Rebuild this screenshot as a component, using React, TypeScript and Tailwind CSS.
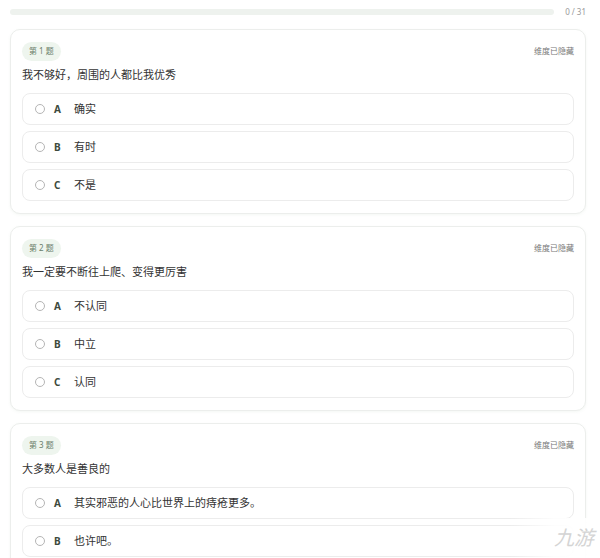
import React from 'react';

interface Question {
  no: number;
  title: string;
  options: string[];
}

const questions: Question[] = [
  { no: 1, title: '我不够好，周围的人都比我优秀', options: ['确实', '有时', '不是'] },
  { no: 2, title: '我一定要不断往上爬、变得更厉害', options: ['不认同', '中立', '认同'] },
  { no: 3, title: '大多数人是善良的', options: ['其实邪恶的人心比世界上的痔疮更多。', '也许吧。'] },
];

const letters = ['A', 'B', 'C'];

function OptionRow({ letter, text }: { letter: string; text: string }) {
  return (
    <div className="flex h-[32px] shrink-0 items-center rounded-[8px] border border-[#ececec] bg-white pl-[12px]">
      <span className="h-[10px] w-[10px] rounded-full border border-[#b5b5b5] bg-white" />
      <span className="ml-[9px] w-[12px] text-[10px] font-bold text-[#3d4a3d]">{letter}</span>
      <span className="ml-[8px] text-[11px] text-[#333]">{text}</span>
    </div>
  );
}

function QuestionCard({ q }: { q: Question }) {
  return (
    <div className="mb-[12px] rounded-[10px] border border-[#eceeec] bg-white px-[11px] pb-[12px] pt-[11px] shadow-[0_1px_3px_rgba(120,150,120,0.08)]">
      <div className="flex h-[20px] items-center justify-between">
        <span className="flex h-[19px] items-center rounded-full bg-[#eef5ee] px-[7px] text-[8px] text-[#6a7d6a]">
          第 {q.no} 题
        </span>
        <span className="text-[8px] text-[#777]">维度已隐藏</span>
      </div>
      <div className="mt-[6px] text-[11px] leading-[16px] text-[#333]">{q.title}</div>
      <div className="mt-[10px] flex flex-col gap-[6px]">
        {q.options.map((o, i) => (
          <OptionRow key={i} letter={letters[i]} text={o} />
        ))}
      </div>
    </div>
  );
}

export default function App() {
  return (
    <div
      className="relative h-[558px] w-[600px] overflow-hidden bg-white pl-[10px] pr-[14px]"
      style={{ fontFamily: '"Noto Sans", "Noto Sans CJK SC", sans-serif' }}
    >
      {/* progress */}
      <div className="flex h-[22px] items-center pt-[1px]">
        <div className="h-[6px] flex-1 rounded-full bg-[#eef2ee]" />
        <span className="ml-[11px] text-[8px] text-[#999]">0 / 31</span>
      </div>
      <div className="mt-[7px]">
        {questions.map((q) => (
          <QuestionCard key={q.no} q={q} />
        ))}
      </div>

      {/* watermark */}
      <div className="absolute bottom-0 right-0 flex h-[40px] w-[90px] items-center justify-end bg-gradient-to-l from-white via-white/90 to-transparent pr-[6px]">
        <span className="text-[20px] italic text-[#d4d4d4]">九游</span>
      </div>
    </div>
  );
}
